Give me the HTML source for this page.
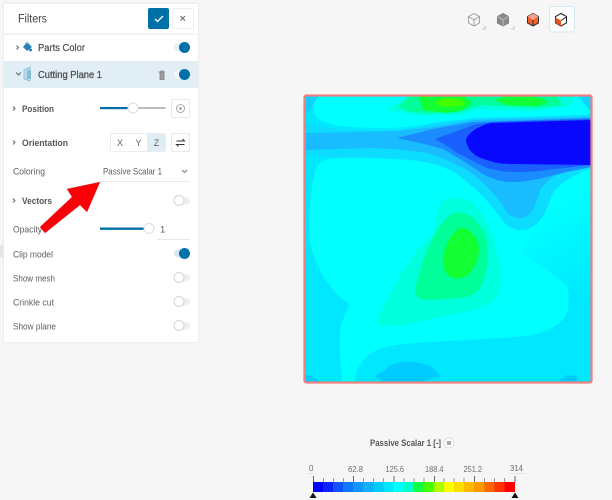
<!DOCTYPE html>
<html><head><meta charset="utf-8">
<style>
html,body{margin:0;padding:0;width:612px;height:500px;overflow:hidden;background:#f6f6f6}
svg{display:block;position:absolute;left:0;top:0}
text{font-family:"Liberation Sans",sans-serif;fill:#5e5e5e;font-size:9.5px}
.b{font-weight:bold;fill:#555;font-size:9.5px}
.t{font-size:8px;fill:#6c6c6c}
</style></head>
<body>
<svg width="612" height="500" viewBox="0 0 612 500" xmlns="http://www.w3.org/2000/svg">
<defs>
<clipPath id="c"><rect x="305" y="96" width="286" height="286"/></clipPath>
<filter id="s" x="-5%" y="-5%" width="110%" height="110%"><feDropShadow dx="0" dy="0" stdDeviation="1" flood-color="#000" flood-opacity=".11"/></filter>
<linearGradient id="g" gradientUnits="userSpaceOnUse" x1="548" y1="205" x2="595" y2="285"><stop offset="0" stop-color="#00ffff"/><stop offset="1" stop-color="#00eaff"/></linearGradient>
</defs>

<!-- plot -->
<g clip-path="url(#c)">
<rect x="305" y="96" width="286" height="286" fill="#00e8ff"/>
<path d="M305 96H318L312 108L305 115Z" fill="#12d0ff"/>
<path d="M580 96H591V112Z" fill="#12d0ff"/>
<!-- light cyan top -->
<path d="M322 96C314 98 312 106 314 113C318 122 330 125 350 127L383 128C400 128 420 126 433 123L477 118L587 115L591 112L577 96Z" fill="#00ffff"/>
<!-- lower big cyan -->
<path d="M333 158C322 160 316 165 315 172C311 190 308 215 309 235C312 255 318 270 328 283C336 295 345 300 350 305C343 318 340 325 340 335C339 350 341 368 342 382H355C355 372 358 368 360 365C366 355 375 350 383 348C400 343 415 343 433 342L500 338C520 337 535 335 543 332C558 326 567 318 568 308C570 298 568 290 567 285L591 240V170L590 168C575 175 560 182 553 193C548 205 545 215 540 220C533 228 527 230 520 230C510 230 503 222 497 213C490 203 482 195 473 187C465 180 458 174 450 170C435 163 420 161 410 160C385 158 360 157 333 158Z" fill="#00ffff"/>
<path d="M520 252C535 262 552 274 567 285C572 290 582 296 591 300V170C575 178 560 190 550 205C540 225 530 240 520 252Z" fill="url(#g)"/>
<!-- intermediate ring -->
<path d="M305 122C312 124 325 128 350 130L383 131C400 131 420 127 433 123L477 118L587 115L591 114V168C575 175 560 182 553 193C548 205 545 215 540 220C533 228 527 230 520 230C510 230 503 222 497 213C490 203 482 195 473 187C465 180 458 174 450 170C435 163 420 161 410 160C385 158 360 157 333 158C322 155 312 155 305 157Z" fill="#0cdcff"/>
<!-- top greens -->
<path d="M385 110L410 96H575L570 106L533 111L480 109L460 115L423 116L405 113Z" fill="#00ffdd"/>
<path d="M398 106L410 96H556L563 105L533 108L480 105L460 112L423 113L407 111Z" fill="#00ff99"/>
<path d="M419 96L423 110L447 113L463 110L471 104L470 100L463 96Z" fill="#11ff33"/>
<path d="M435 103L443 98L460 99L465 103L462 106L443 107Z" fill="#44ff00"/>
<path d="M495 100L507 96H528L540 98L548 102L537 106L507 105Z" fill="#11ff33"/>
<!-- bands -->
<path d="M305 133L397 131L433 127L473 120L591 117V167L560 173C550 178 544 184 540 190C537 200 535 208 530 213C526 218 523 218 520 218C513 218 509 215 507 212C502 204 497 197 490 190C483 182 475 176 467 170C455 163 440 157 427 153C410 150 385 148 367 148L305 150Z" fill="#19bcff"/>
<path d="M397 138L433 129L473 122L591 118V167L567 172C550 176 530 182 513 182C500 182 488 178 480 172C470 165 458 158 445 150C430 145 412 141 397 138Z" fill="#1a8cff"/>
<path d="M435 139L473 125L493 122L591 119V165L547 170C535 172 525 172 513 172C505 172 495 170 487 168C478 164 468 158 457 153C450 148 442 143 435 139Z" fill="#1a60ff"/>
<path d="M466 139C470 132 475 129 480 127C485 124 490 123 493 123L591 120V165L513 164C503 164 495 163 487 160C478 158 473 154 470 150C467 146 466 142 466 139Z" fill="#0808ff"/>
<!-- centre green -->
<path d="M378 325C376 322 381 310 390 295L400 275L417 250L433 235C436 220 438 208 443 200C452 196 465 198 473 203C483 213 490 225 493 237L500 268L500 278C499 288 498 292 497 298C490 305 478 309 467 312C440 316 415 323 400 326Z" fill="#00ffdd"/>
<path d="M453 213C445 218 438 228 433 237C425 255 418 272 415 292C415 296 417 298 427 300L460 298C470 297 476 293 480 288C485 278 488 265 488 252C488 240 485 232 477 222C470 214 460 211 453 213Z" fill="#00ff99"/>
<path d="M460 228C452 232 445 245 443 258C443 266 445 272 448 275C452 279 458 279 460 278C467 277 471 273 473 268C477 262 479 256 479 250C479 243 476 237 473 235C470 230 465 227 460 228Z" fill="#11ff33"/>
<!-- bottom blobs -->
<path d="M375 377C378 372 385 372 388 367C395 362 405 361 413 362C425 363 433 367 437 372L441 377L433 378L420 382H385Z" fill="#00ccff"/>
<path d="M305 375L312 376L320 382H305Z" fill="#00ccff"/>
<path d="M557 382L562 378L567 375L577 376V382Z" fill="#00ccff"/>
</g>
<rect x="304.500" y="95.500" width="287" height="287" rx="2" fill="none" stroke="#f07f7f" stroke-width="2.200"/>

<!-- view icons -->
<g fill="none" stroke="#999" stroke-width=".9">
<path d="M474 13.500L479.500 16.500V23L474 26L468.500 23V16.500Z"/><path d="M468.500 16.500L474 20L479.500 16.500M474 20V26"/>
</g>
<path d="M482 29L485 29L485 26" fill="none" stroke="#c4c4c4"/>
<path d="M511 29L514 29L514 26" fill="none" stroke="#c4c4c4"/>
<path d="M503 13.500L508.500 16.500V23L503 26L497.500 23V16.500Z" fill="#8a8a8a" stroke="#777" stroke-width=".9"/>
<path d="M497.500 16.500L503 20L508.500 16.500M503 20V26" fill="none" stroke="#c4c4c4" stroke-width=".9"/>
<path d="M533 13.500L538.500 16.500V23L533 26L527.500 23V16.500Z" fill="#f0602a" stroke="#333" stroke-width="1"/>
<path d="M527.500 16.500L533 20L538.500 16.500L533 13.500Z" fill="#f8a090"/>
<path d="M533 20V26" stroke="#333"/>
<rect x="549.500" y="6.500" width="25" height="25.500" rx="3" fill="#fbfdfe" stroke="#d5e9f2"/>
<path d="M561 13.500L566.500 16.500V23L561 26L555.500 23V16.500Z" fill="#fff" stroke="#222" stroke-width="1"/>
<path d="M555.500 17.500L561 20.500V26L555.500 23Z" fill="#e8551c"/>
<path d="M561 20.500L566.500 17" fill="none" stroke="#222"/>

<!-- left handle -->
<rect x="0" y="245" width="3" height="12" fill="#e6e6e6"/>

<!-- panel -->
<rect x="4" y="4" width="194" height="338" fill="#fff" filter="url(#s)"/>
<rect x="4" y="33" width="194" height="2" fill="#f3f3f3"/>
<rect x="4" y="61" width="194" height="27" fill="#e1eef6"/>

<text x="18" y="22.500" textLength="29" lengthAdjust="spacingAndGlyphs" style="font-size:11.500px;fill:#444">Filters</text>
<rect x="148" y="8" width="21" height="21" rx="2" fill="#0070a8"/>
<path d="M155 19L157.500 21.500L163 16" fill="none" stroke="#fff" stroke-width="1.300"/>
<rect x="172.500" y="8.500" width="21" height="20" rx="2" fill="#fff" stroke="#eee"/>
<path d="M180.500 16L185 20.500M185 16L180.500 20.500" stroke="#666" stroke-width="1"/>

<path d="M16.500 45.500L18.500 47.500L16.500 49.500" fill="none" stroke="#666"/>
<path d="M27 42L32 47L27 51L23 47Z" fill="#2a83b8"/><circle cx="30.500" cy="50" r="1.500" fill="#2a83b8"/><path d="M25 44L28 42" stroke="#8cc0dc" stroke-width="1.500"/>
<text x="38" y="51" textLength="47" lengthAdjust="spacingAndGlyphs" style="fill:#4d4d4d;font-size:10px;stroke:#4d4d4d;stroke-width:.2px">Parts Color</text>
<rect x="174" y="43.500" width="12" height="8" rx="4" fill="#e4f0f6"/>
<circle cx="184.500" cy="47.500" r="5.500" fill="#0070a8"/>

<path d="M16 72.500L18.500 75L21 72.500" fill="none" stroke="#666"/>
<path d="M24 70L30 67V81L24 79Z" fill="#bcdcec" stroke="#80b8d4" stroke-width=".7"/><rect x="27" y="70" width="4" height="9" fill="#6fb2d4" opacity=".7"/>
<text x="38" y="78" textLength="64" lengthAdjust="spacingAndGlyphs" style="fill:#4a4a4a;font-size:10px;stroke:#4a4a4a;stroke-width:.25px">Cutting Plane 1</text>
<path d="M158.500 72H165M160 72.500V79.500H164V72.500M160.500 71H163.500" fill="#9a9a9a" stroke="#8a8a8a" stroke-width=".9"/>
<rect x="174" y="70.500" width="12" height="8" rx="4" fill="#f3f9fc"/>
<circle cx="184.500" cy="74.500" r="5.500" fill="#0070a8"/>

<!-- Position -->
<path d="M13 106.500L15 108.500L13 110.500" fill="none" stroke="#666"/>
<text x="22" y="112" class="b" textLength="32" lengthAdjust="spacingAndGlyphs">Position</text>
<rect x="100" y="107" width="65.500" height="2" fill="#bbb"/>
<rect x="100" y="107" width="33" height="2.200" fill="#0070a8"/>
<circle cx="133" cy="108" r="5" fill="#fff" stroke="#ddd"/>
<rect x="171.500" y="99.500" width="18" height="18" rx="1.500" fill="#fff" stroke="#e8e8e8"/>
<circle cx="180.500" cy="108.500" r="4" fill="none" stroke="#999" stroke-width=".8"/><circle cx="180.500" cy="108.500" r="1.500" fill="#aaa"/>

<!-- Orientation -->
<path d="M13 140.500L15 142.500L13 144.500" fill="none" stroke="#666"/>
<text x="22" y="146" class="b" textLength="46" lengthAdjust="spacingAndGlyphs">Orientation</text>
<rect x="110.500" y="133.500" width="55" height="18" rx="2" fill="#fff" stroke="#ececec"/>
<rect x="147" y="134" width="18" height="17" fill="#dfedf5"/>
<text x="120" y="146" style="font-size:9px;text-anchor:middle">X</text>
<text x="138.500" y="146" style="font-size:9px;text-anchor:middle">Y</text>
<text x="156.500" y="146" style="font-size:9px;text-anchor:middle">Z</text>
<rect x="171.500" y="133.500" width="18" height="18" rx="1.500" fill="#fff" stroke="#e8e8e8"/>
<path d="M176.500 141H184.500L182.500 139M184.500 144.500H176.500L178.500 146.500" fill="none" stroke="#333" stroke-width="1"/>

<!-- Coloring -->
<text x="13" y="174.500" textLength="32" lengthAdjust="spacingAndGlyphs" style="font-size:9.500px">Coloring</text>
<text x="103" y="174.500" textLength="59" lengthAdjust="spacingAndGlyphs" style="font-size:9.500px">Passive Scalar 1</text>
<path d="M182 170L184.500 172.500L187 170" fill="none" stroke="#777"/>
<rect x="100" y="181" width="90" height="1" fill="#e8e8e8"/>

<!-- Vectors -->
<path d="M13 198.500L15 200.500L13 202.500" fill="none" stroke="#666"/>
<text x="22" y="204" class="b" textLength="30" lengthAdjust="spacingAndGlyphs">Vectors</text>
<rect x="180" y="197" width="10" height="7.500" rx="3.700" fill="#eee"/>
<circle cx="179" cy="200.500" r="5" fill="#fff" stroke="#d4d4d4"/>

<!-- Opacity -->
<text x="13" y="232.500" textLength="29" lengthAdjust="spacingAndGlyphs" style="font-size:9.500px">Opacity</text>
<rect x="100" y="227.500" width="50" height="2.400" fill="#0070a8"/>
<circle cx="149" cy="228.500" r="5" fill="#fff" stroke="#ddd"/>
<text x="160" y="232.500" style="font-size:9.500px">1</text>
<rect x="157" y="239" width="33" height="1" fill="#e8e8e8"/>

<text x="13" y="257.500" textLength="40" lengthAdjust="spacingAndGlyphs" style="font-size:9.500px">Clip model</text>
<rect x="174" y="249.500" width="12" height="8" rx="4" fill="#d5e8f1"/>
<circle cx="184.500" cy="253.500" r="5.500" fill="#0070a8"/>

<text x="13" y="281.500" textLength="42" lengthAdjust="spacingAndGlyphs" style="font-size:9.500px">Show mesh</text>
<rect x="180" y="274" width="10" height="7.500" rx="3.700" fill="#eee"/>
<circle cx="179" cy="277.500" r="5" fill="#fff" stroke="#d4d4d4"/>

<text x="13" y="305.500" textLength="41" lengthAdjust="spacingAndGlyphs" style="font-size:9.500px">Crinkle cut</text>
<rect x="180" y="298" width="10" height="7.500" rx="3.700" fill="#eee"/>
<circle cx="179" cy="301.500" r="5" fill="#fff" stroke="#d4d4d4"/>

<text x="13" y="329.500" textLength="43" lengthAdjust="spacingAndGlyphs" style="font-size:9.500px">Show plane</text>
<rect x="180" y="322" width="10" height="7.500" rx="3.700" fill="#eee"/>
<circle cx="179" cy="325.500" r="5" fill="#fff" stroke="#d4d4d4"/>

<!-- red arrow -->
<path d="M100 182L67 189L72 197L40 227L45 233L80 205L87 212Z" fill="#fa0006" stroke="#c8484a" stroke-width=".4"/>

<!-- legend -->
<text x="370" y="446" class="b" textLength="71" lengthAdjust="spacingAndGlyphs">Passive Scalar 1 [-]</text>
<circle cx="449" cy="443" r="5" fill="#fff" stroke="#ddd"/>
<rect x="447" y="441" width="4" height="4" fill="#aaa"/>

<text class="t" x="309" y="471">0</text>
<text class="t" x="348" y="472" textLength="15" lengthAdjust="spacingAndGlyphs">62.8</text>
<text class="t" x="385.500" y="472" textLength="18.500" lengthAdjust="spacingAndGlyphs">125.6</text>
<text class="t" x="425" y="472" textLength="18.500" lengthAdjust="spacingAndGlyphs">188.4</text>
<text class="t" x="463.500" y="472" textLength="18.500" lengthAdjust="spacingAndGlyphs">251.2</text>
<text class="t" x="510" y="471" textLength="13" lengthAdjust="spacingAndGlyphs">314</text>
<rect x="307" y="473" width="9" height="1" fill="#e6e6e6"/>
<rect x="509" y="473" width="17" height="1" fill="#e6e6e6"/>

<g stroke="#999" stroke-width="1">
<path d="M323.500 478V482M333.500 478V482M343.500 478V482M363.500 478V482M373.500 478V482M383.500 478V482M404 478V482M414 478V482M424 478V482M444 478V482M454 478V482M464 478V482M484.500 478V482M494.500 478V482M504.500 478V482"/>
</g>
<g stroke="#666" stroke-width="1">
<path d="M313.500 476V482M353.500 476V482M394 476V482M434.500 476V482M474.500 476V482M515 476V482"/>
</g>
<g>
<rect x="313" y="482" width="10.500" height="10" fill="#0000ff"/>
<rect x="323" y="482" width="10.500" height="10" fill="#0a22ff"/>
<rect x="333" y="482" width="10.500" height="10" fill="#0f50ff"/>
<rect x="343" y="482" width="10.500" height="10" fill="#0f78ff"/>
<rect x="353" y="482" width="10.500" height="10" fill="#0f96ff"/>
<rect x="363" y="482" width="10.500" height="10" fill="#0fb0ff"/>
<rect x="373.500" y="482" width="10.500" height="10" fill="#00ccff"/>
<rect x="383.500" y="482" width="10.500" height="10" fill="#00e6ff"/>
<rect x="393.500" y="482" width="10.500" height="10" fill="#00ffff"/>
<rect x="403.500" y="482" width="10.500" height="10" fill="#00ffcc"/>
<rect x="413.500" y="482" width="10.500" height="10" fill="#11ff44"/>
<rect x="423.500" y="482" width="10.500" height="10" fill="#44ff00"/>
<rect x="433.500" y="482" width="10.500" height="10" fill="#aaff00"/>
<rect x="444" y="482" width="10.500" height="10" fill="#ffff00"/>
<rect x="454" y="482" width="10.500" height="10" fill="#ffdd00"/>
<rect x="464" y="482" width="10.500" height="10" fill="#ffbb00"/>
<rect x="474" y="482" width="10.500" height="10" fill="#ff9900"/>
<rect x="484.500" y="482" width="10.500" height="10" fill="#ff6600"/>
<rect x="494.500" y="482" width="10.500" height="10" fill="#ff3300"/>
<rect x="504.500" y="482" width="10.500" height="10" fill="#ff0000"/>
</g>
<path d="M309.500 498H316.500L313 492.500Z" fill="#111"/>
<path d="M511.500 498H518.500L515 492.500Z" fill="#111"/>
</svg>
</body></html>
